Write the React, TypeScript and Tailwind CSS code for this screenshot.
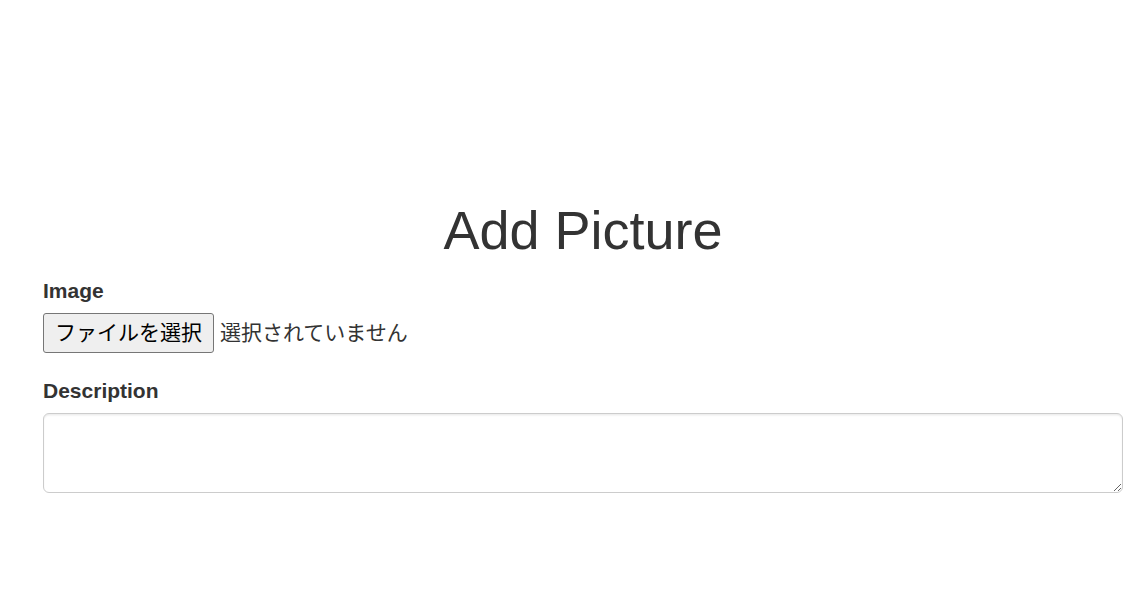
import React from 'react';

const App: React.FC = () => {
  return (
    <div
      className="min-h-screen w-full bg-white text-[#333] text-[21px] leading-[30px]"
      style={{ fontFamily: '"Liberation Sans", "Noto Sans CJK JP", sans-serif' }}
    >
      <div className="ml-[43px] w-[1080px] pt-[201px]">
        {/* --- TITLE --- */}
        <h1 className="text-center text-[54px] leading-[59.4px] font-normal text-[#333] mb-[15px]">
          Add Picture
        </h1>

        {/* --- IMAGE FIELD --- */}
        <div className="mb-[22.5px]">
          <label className="block font-bold pt-[1px] mb-[6.5px]">Image</label>
          <div className="flex items-center gap-[6px] h-[40px]">
            <button
              type="button"
              className="h-[40px] w-[171px] bg-[#efefef] border border-[#767676] rounded-[3px] text-black text-[21px] leading-none"
            >
              ファイルを選択
            </button>
            <span className="text-[#333]">選択されていません</span>
          </div>
        </div>

        {/* --- DESCRIPTION FIELD --- */}
        <div>
          <label className="block font-bold pt-[1px] mb-[6.5px]">Description</label>
          <textarea className="block w-full h-[80px] border border-[#ccc] rounded-[6px] shadow-[inset_0_1.5px_1.5px_rgba(0,0,0,0.075)] px-[18px] py-[9px] outline-none" />
        </div>
      </div>
    </div>
  );
};

export default App;
